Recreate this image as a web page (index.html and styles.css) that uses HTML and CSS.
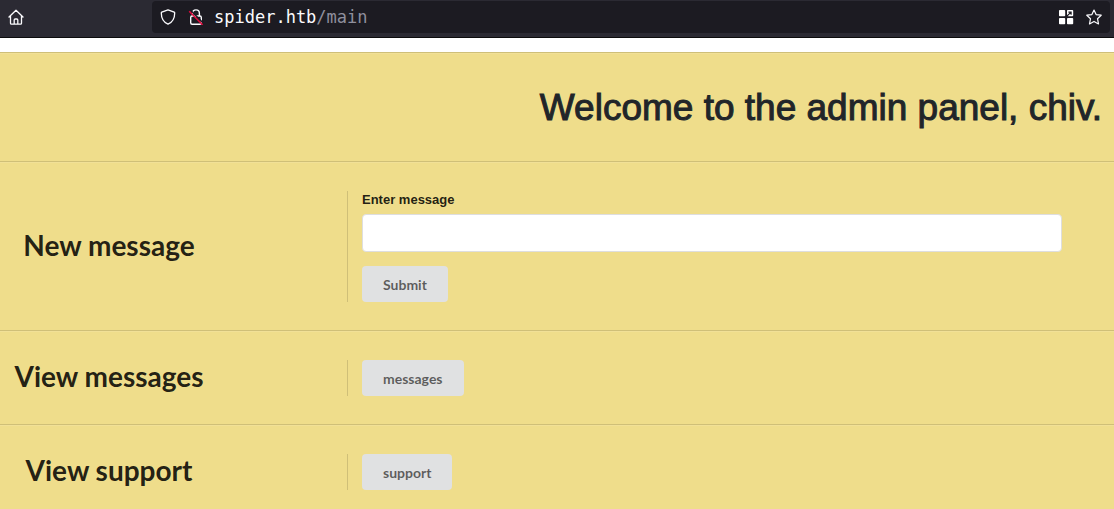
FILE: index.html
```html
<!DOCTYPE html>
<html lang="en">
<head>
<meta charset="utf-8">
<title>Admin panel</title>
<link rel="stylesheet" href="styles.css">
</head>
<body>
<header class="toolbar">
  <button class="icon-button home" aria-label="Home">
    <svg width="16" height="16" viewBox="0 0 16 16" fill="none" stroke="#fbfbfe" stroke-width="1.3" stroke-linejoin="round" stroke-linecap="round"><path d="M1 8 L8 1.2 L15 8 M2.5 7v7.2a1 1 0 0 0 1 1h9a1 1 0 0 0 1-1V7M6.2 15v-4a1 1 0 0 1 1-1h1.6a1 1 0 0 1 1 1v4"/></svg>
  </button>
  <div class="urlbar">
    <button class="icon-button" aria-label="Tracking protection">
      <svg width="16" height="16" viewBox="0 0 16 16" fill="none" stroke="#fbfbfe" stroke-width="1.3" stroke-linejoin="round"><path d="M8 .8 14.2 3.2a.8.8 0 0 1 .5.8C14.7 9 12.5 13.2 8 15.2 3.5 13.2 1.3 9 1.3 4a.8.8 0 0 1 .5-.8Z"/></svg>
    </button>
    <button class="icon-button" aria-label="Connection not secure">
      <svg width="16" height="16" viewBox="0 0 16 16" fill="none" stroke="#fbfbfe" stroke-width="1.4"><path d="M4.6 7V4.300a3.400 3.400 0 0 1 6.800 0V7"/><rect x="2.700" y="7" width="10.600" height="8.300" rx="1.500"/><path d="M2.600 1.200 15.600 14.400" stroke="#1c1b22" stroke-width="1.400"/><path d="M1.200 2.200 14.600 15.800" stroke="#e2093c" stroke-width="1.500"/></svg>
    </button>
    <span class="url"><span class="host">spider.htb</span>/main</span>
    <button class="icon-button" aria-label="Extensions">
      <svg width="16" height="16" viewBox="0 0 16 16" fill="#fff"><rect x="1" y="1" width="6.200" height="6.200" rx=".8"/><rect x="1" y="9" width="6.200" height="6.200" rx=".8"/><rect x="9" y="9" width="6.200" height="6.200" rx=".8"/><path d="M9.800 1h4.600a.8.8 0 0 1 .8.8v4.600a.8.8 0 0 1-.8.800H9.800a.8.8 0 0 1-.8-.8V1.800a.8.8 0 0 1 .8-.8Z"/><path d="M8.500 7.500 12.800 3.400M10.400 3.100h2.700v2.700" fill="none" stroke="#1c1b22" stroke-width="1.200"/></svg>
    </button>
    <button class="icon-button" aria-label="Bookmark">
      <svg width="16" height="16" viewBox="0 0 16 16" fill="none" stroke="#fbfbfe" stroke-width="1.2" stroke-linejoin="round"><path d="M8 1 10.100 5.600 15.200 6.200 11.500 9.700 12.500 14.900 8 12.400 3.500 14.900 4.500 9.700 .8 6.200 5.900 5.600Z"/></svg>
    </button>
  </div>
</header>
<main class="panel">
  <section class="welcome">
    <h1>Welcome to the admin panel, chiv.</h1>
  </section>
  <section class="row">
    <h2>New message</h2>
    <form class="content">
      <label for="message">Enter message</label>
      <input id="message" type="text">
      <button class="button" type="button">Submit</button>
    </form>
  </section>
  <section class="row">
    <h2>View messages</h2>
    <div class="content"><button class="button" type="button">messages</button></div>
  </section>
  <section class="row">
    <h2>View support</h2>
    <div class="content"><button class="button" type="button">support</button></div>
  </section>
</main>
</body>
</html>
```
FILE: styles.css
```css
* { box-sizing: border-box; }
html { height: 100%; }
body {
  margin: 0;
  min-height: 100%;
  display: flex;
  flex-direction: column;
  background: #fff;
  font-family: Lato, "Liberation Sans", sans-serif;
  color: rgba(0, 0, 0, .87);
}
.toolbar {
  display: flex;
  align-items: center;
  gap: 128px;
  height: 38px;
  padding: 1px 4px 4px 8px;
  background: #2b2a33;
  border-bottom: 1px solid #0c0c0d;
}
.icon-button {
  display: block;
  flex: none;
  width: 16px;
  height: 16px;
  padding: 0;
  border: 0;
  background: none;
}
.icon-button svg { display: block; }
.urlbar {
  flex: 1;
  display: flex;
  align-items: center;
  gap: 12px;
  height: 32px;
  padding: 0 8px;
  border-radius: 4px;
  background: #1c1b22;
}
.url {
  flex: 1;
  margin-left: -2px;
  font: 17px/20px "DejaVu Sans Mono", monospace;
  color: #8f8f9d;
}
.host { color: #fbfbfe; }
.panel {
  flex: 1;
  margin-top: 14px;
  background: #efdd8b;
}
.welcome,
.row {
  border-top: 1px solid #cfbf78;
  box-shadow: inset 0 1px #f1e097;
}
.welcome {
  padding: 29px 12px 27px;
  text-align: right;
}
h1 {
  margin: 0;
  font: 500 37px/52px "Liberation Sans", Arial, sans-serif;
  color: #212529;
  -webkit-text-stroke: 1px #212529;
}
.row {
  display: flex;
  align-items: center;
  padding: 29px 0 28px;
}
h2 {
  flex: none;
  width: 218px;
  margin: 0 129px 0 0;
  padding-bottom: 4px;
  text-align: center;
  font-size: 28px;
  line-height: 32px;
  font-weight: 700;
}
.content {
  flex: 1;
  display: flex;
  flex-direction: column;
  align-items: flex-start;
  padding: 0 52px 0 14px;
  border-left: 1px solid #cfbf78;
}
label {
  margin-bottom: 5px;
  font: bold 13px/18px "Liberation Sans", Arial, sans-serif;
}
input {
  width: 100%;
  height: 38px;
  margin-bottom: 14px;
  padding: 9px 14px;
  border: 1px solid #dededf;
  border-radius: 4px;
  background: #fff;
  font: 14px/18px Lato, sans-serif;
}
.button {
  height: 36px;
  padding: 2px 21px 0;
  border: 0;
  border-radius: 4px;
  background: #e0e1e2;
  color: rgba(0, 0, 0, .6);
  font: bold 14px/14px Lato, sans-serif;
}
```
